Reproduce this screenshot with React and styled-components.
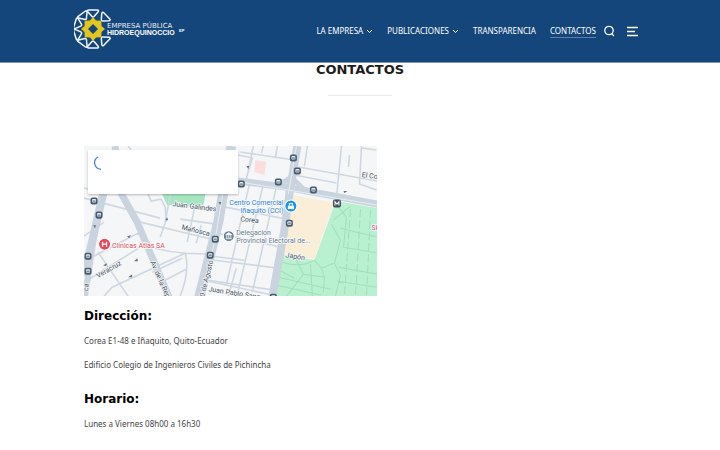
import React, { useState } from 'react'
import styled, { createGlobalStyle } from 'styled-components'

const GlobalStyle = createGlobalStyle`
  body {
    margin: 0;
    background: #fff;
    color: #444;
    font-family: 'Noto Sans', 'DejaVu Sans', sans-serif;
    font-size: 8px;
  }
`

const Header = styled.header`
  display: flex;
  align-items: center;
  justify-content: space-between;
  height: 63px;
  padding: 0 81px 0 74px;
  background: #15467b;
  border-bottom: 1px solid #7c95b2;
  box-sizing: border-box;
`

const Brand = styled.a`
  display: flex;
  padding-bottom: 4px;

  & > svg {
    width: 112px;
    height: 40px;
  }
`

const Nav = styled.nav`
  display: flex;
  align-items: center;
  gap: 14px;
`

const NavLink = styled.a`
  display: flex;
  align-items: center;
  gap: 2px;
  color: #fff;
  line-height: 12px;
  text-decoration: none;
  white-space: nowrap;
  border-bottom: 1px solid ${props => props.$active ? '#5f7fa4' : 'transparent'};

  & > svg {
    width: 8px;
    height: 8px;
  }
`

const Tools = styled.div`
  display: flex;
  align-items: center;
  gap: 12px;
  margin-left: -7px;
`

const IconButton = styled.button`
  display: flex;
  padding: 0;
  border: none;
  background: none;
  color: #fff;
  cursor: pointer;

  & > svg {
    width: 12px;
    height: 12px;
  }
`

const Title = styled.h1`
  margin: 0;
  color: #1c1c1c;
  font-family: 'DejaVu Sans', sans-serif;
  font-size: 13px;
  line-height: 14px;
  text-align: center;
`

const Divider = styled.hr`
  width: 64px;
  margin: 18px auto 50px;
  border: none;
  border-top: 1px solid #e9e9e9;
`

const Content = styled.main`
  max-width: 552px;
  margin: 0 auto;
  padding: 0 24px;
`

const MapFrame = styled.div`
  position: relative;
  width: 53%;

  & > svg {
    display: block;
    width: 100%;
  }
`

const InfoCard = styled.div`
  position: absolute;
  top: 4px;
  left: 4px;
  width: 150px;
  height: 44px;
  background: #fff;
  box-shadow: 0 1px 2px rgba(0, 0, 0, 0.25);

  & > svg {
    margin: 6px;
    width: 14px;
    height: 14px;
  }
`

const SectionTitle = styled.h2`
  margin: 0 0 11px;
  color: #000;
  font-family: 'DejaVu Sans', sans-serif;
  font-size: 12px;
  line-height: 16px;
`

const Section = styled.section`
  margin-top: ${props => props.$first ? 12 : 20}px;

  & > p {
    margin: 0 0 12px;
    line-height: 12px;
  }
`

// the right side of the ring stays open for the name
const petals = [0, 46, 134, 180, 216, 252, 288, 324]

function Logo() {
  return <svg viewBox="0 0 112 40" role="img" aria-label="Empresa Pública Hidroequinoccio EP">
    <g transform="translate(19 20)">
      {petals.map(angle => (
        <path key={angle} transform={`rotate(${angle})`} d="M-4.5 -19H4.5Q6 -19 5.2 -17.3L1 -12.5Q0 -11.5 -1 -12.5L-5.2 -17.3Q-6 -19 -4.5 -19Z"
          fill="none" stroke="#f4f7fa" strokeWidth="1.5" strokeLinejoin="round" />
      ))}
      <path d="M0 -12L3 -8.5L8.3 -8.3L8.5 -3L12 0L8.5 3L8.3 8.3L3 8.5L0 12L-3 8.5L-8.3 8.3L-8.5 3L-12 0L-8.5 -3L-8.3 -8.3L-3 -8.5Z" fill="#e3c51f" />
      <path d="M0 -5L5 0L0 5L-5 0Z" fill="#15467b" />
    </g>
    <text x="33" y="19" fill="#e8eef4" fontFamily="DejaVu Sans, sans-serif" fontSize="7">EMPRESA PÚBLICA</text>
    <text x="33" y="26" fill="#fff" fontFamily="Liberation Sans, sans-serif" fontSize="7" fontWeight="bold">HIDROEQUINOCCIO</text>
    <text x="105" y="23" fill="#fff" fontFamily="Liberation Sans, sans-serif" fontSize="4" fontWeight="bold">EP</text>
  </svg>
}

function Chevron() {
  return <svg viewBox="0 0 8 8" fill="none" stroke="currentColor" aria-hidden="true">
    <path d="M2 3L4.5 5.5L7 3" />
  </svg>
}

const stops = [
  [94, 201], [99, 215], [88, 256], [88, 271], [215, 239], [210, 255], [241, 184], [278, 182],
  [293, 158], [297, 171], [313, 190], [289, 223], [273, 297]
]

const streets = [
  ['Juan Galindes', 172, 206, 7], ['Mañosca', 181, 229, 14], ['Corea', 240, 221, 6], ['Japón', 285, 257, 9],
  ['El Co', 361, 177, 7], ['Veracruz', 98, 278, -30], ['Juan Pablo Sanz', 208, 291, 9],
  ['Av. de la Rep', 150, 262, 66], ['0 de Agosto', 204, 297, -76], ['ca', 88, 291, -85]
]

function CityMap() {
  return <svg viewBox="84 146 292 150" fontFamily="Roboto, sans-serif" fontSize="7" role="img" aria-label="Mapa de ubicación">
    <rect x="84" y="146" width="293" height="150" fill="#f5f6f8" />
    <path d="M160 190H206L203 206L167 205Z" fill="#a5e5c1" />
    <path d="M292 195L334 203L327 221L314 259L281 253Z" fill="#fbeed8" />
    <path d="M335 201L377 208V297H273L282 254L314 260L327 224Z" fill="#b9f0d0" />
    <path d="M255 160L266 162L264 175L254 172Z" fill="#fbdde0" />
    <g fill="none" stroke="#a0dfba" strokeWidth="1">
      <path d="M282 262Q300 268 314 260L321 268L333 263M295 258L303 274L286 296M303 274L324 277L323 292M321 268L324 277M331 224L340 240L334 263L340 275L335 296M336 205L346 217L343 247L377 253M340 228L377 237M338 267L377 274M337 281L377 287M333 220L350 206" />
      <path d="M350 209L344 295M360 209L355 296M370 210L366 296" strokeDasharray="8 3" />
      <path d="M278 277L330 289M277 285L321 295M279 270L294 278M310 264L312 296" />
    </g>
    <g fill="none" stroke="#cfd8e1" strokeWidth="1.6">
      <path d="M84 198L160 218M104 222L84 236M110 194L84 188M148 194L151 201L161 199L165 207L166 220L160 237M128 146L160 190" />
      <path d="M84 282L148 242L138 233L92 257M104 296L112 287L185 253Q190 270 180 296M155 248Q170 252 185 253L212 254M152 272L182 258M159 283L186 269M98 252L128 296" />
      <path d="M136 221L216 240M180 219L216 224M195 205L187 242M170 195L165 222M201 225L196 243M212 256L244 260M204 280L273 295M236 268L228 296" />
      <path d="M220 206L286 219M217 233L281 247M214 260L279 268M208 280L275 290M250 180L226 285M263 184L238 290M276 187L252 292M238 155L252 158L245 182M253 146L246 180M263 146L261 153" />
      <path d="M240 152L294 160M298 167L377 181M294 175L336 183M341 146L336 198M349 155L348 167M361 146L359 184L376 190M307 146L304 166M277 146L275 158M376 150L361 148" />
    </g>
    <g fill="none" stroke="#c9d4de">
      <path d="M104 190L84 276" strokeWidth="8" />
      <path d="M98 210L85 296" strokeWidth="6" />
      <path d="M115 146L121 193L137 222L169 297" strokeWidth="7" />
      <path d="M231 146L218 222L199 297" strokeWidth="10" />
      <path d="M238 181L285 187L377 204" strokeWidth="7" />
      <path d="M297 146L289 194L284 230L272 297" strokeWidth="8" />
      <path d="M278 185L291 177L304 190" strokeWidth="5" />
    </g>
    <g fill="none" stroke="#e7edf2" strokeWidth="1">
      <path d="M228 160L215 239L201 296M240 182L377 205M296 146L288 194" />
    </g>
    <g fill="#657586">
      <path d="M127 236l4 -1l-2 3zM137 258l-3 3l4 0zM128 277l4 -3l0 3zM165 220l2 -3l1 3zM218 202l2 3l1 -3zM343 191l4 0l-3 2zM103 265l4 -2l-1 3zM246 166l2 3l1 -3zM93 225l2 3l1 -3z" />
    </g>
    {stops.map(([x, y]) => (
      <g key={`${x}-${y}`} transform={`translate(${x} ${y})`}>
        <rect x="-3.5" y="-3.5" width="7" height="7" rx="2" fill="#465b6d" />
        <rect x="-2" y="-2" width="4" height="3.5" rx="1" fill="#e9eff4" />
        <path d="M-1.5 0H1.5" stroke="#465b6d" strokeWidth="1" />
      </g>
    ))}
    <g fill="#475563" stroke="#f5f6f8" strokeWidth="1.5" paintOrder="stroke">
      {streets.map(([name, x, y, angle]) => (
        <text key={name} transform={`translate(${x} ${y}) rotate(${angle})`}>{name}</text>
      ))}
    </g>
    <g stroke="#f8fafb" strokeWidth="1.5" paintOrder="stroke">
      <g fill="#2f7fd0" textAnchor="end">
        <text x="283" y="205">Centro Comercial</text>
        <text x="283" y="213">Iñaquito (CCI)</text>
      </g>
      <g fill="#6c7f91">
        <text x="236" y="235">Delegacion</text>
        <text x="236" y="243">Provincial Electoral de...</text>
      </g>
      <text x="112" y="248" fill="#d9515c">Clinicas Atlas SA</text>
      <text x="371" y="230" fill="#dc4f84">Sk</text>
    </g>
    <circle cx="104.5" cy="244" r="6" fill="#e5495a" stroke="#fff" />
    <path d="M102.5 241.5V246.5M106.5 241.5V246.5M102.5 244H106.5" stroke="#fff" strokeWidth="1.3" />
    <circle cx="290.5" cy="206" r="6" fill="#1a94ea" stroke="#fff" />
    <path d="M287.5 205.5H293.5V209H287.5Z" fill="#fff" />
    <path d="M289 205.5V203.5H292V205.5" fill="none" stroke="#fff" />
    <circle cx="228.5" cy="236" r="5.5" fill="#6f8497" stroke="#fff" />
    <path d="M225.5 234.5L228.5 232.5L231.5 234.5ZM226.5 235V238M228.5 235V238M230.5 235V238M225.5 238.5H231.5" fill="#fff" stroke="#fff" strokeWidth="0.8" />
    <rect x="332.5" y="199.5" width="8" height="8" rx="2" fill="#3f4f5d" />
    <path d="M334.5 205.5V201.5L336.5 204L338.5 201.5V205.5" fill="none" stroke="#fff" strokeWidth="1" />
  </svg>
}

export default function App() {
  const [menuOpen, setMenuOpen] = useState(false)

  return <>
    <GlobalStyle />
    <Header>
      <Brand href="#"><Logo /></Brand>
      <Nav>
        <NavLink href="#empresa">LA EMPRESA <Chevron /></NavLink>
        <NavLink href="#publicaciones">PUBLICACIONES <Chevron /></NavLink>
        <NavLink href="#transparencia">TRANSPARENCIA</NavLink>
        <NavLink href="#contactos" $active>CONTACTOS</NavLink>
        <Tools>
          <IconButton aria-label="Buscar">
            <svg viewBox="0 0 12 12" fill="none" stroke="currentColor" strokeWidth="1.3">
              <circle cx="6" cy="5.5" r="4.2" />
              <path d="M8.5 8.5L11 11" />
            </svg>
          </IconButton>
          <IconButton aria-label="Menú" aria-expanded={menuOpen} onClick={() => setMenuOpen(!menuOpen)}>
            <svg viewBox="0 0 12 12" fill="none" stroke="currentColor" strokeWidth="1.5">
              <path d="M0 2.5H11M0 6.5H8M0 10.5H11" />
            </svg>
          </IconButton>
        </Tools>
      </Nav>
    </Header>
    <Title>CONTACTOS</Title>
    <Divider />
    <Content>
      <MapFrame>
        <CityMap />
        <InfoCard>
          <svg viewBox="0 0 14 14" fill="none" stroke="#4a7fd0" strokeWidth="1.3" aria-hidden="true">
            <path d="M4 1Q0.5 3 0.5 7Q1.5 13 7 13.3" />
          </svg>
        </InfoCard>
      </MapFrame>
      <Section $first>
        <SectionTitle>Dirección:</SectionTitle>
        <p>Corea E1-48 e Iñaquito, Quito-Ecuador</p>
        <p>Edificio Colegio de Ingenieros Civiles de Pichincha</p>
      </Section>
      <Section>
        <SectionTitle>Horario:</SectionTitle>
        <p>Lunes a Viernes 08h00 a 16h30</p>
      </Section>
    </Content>
  </>
}
